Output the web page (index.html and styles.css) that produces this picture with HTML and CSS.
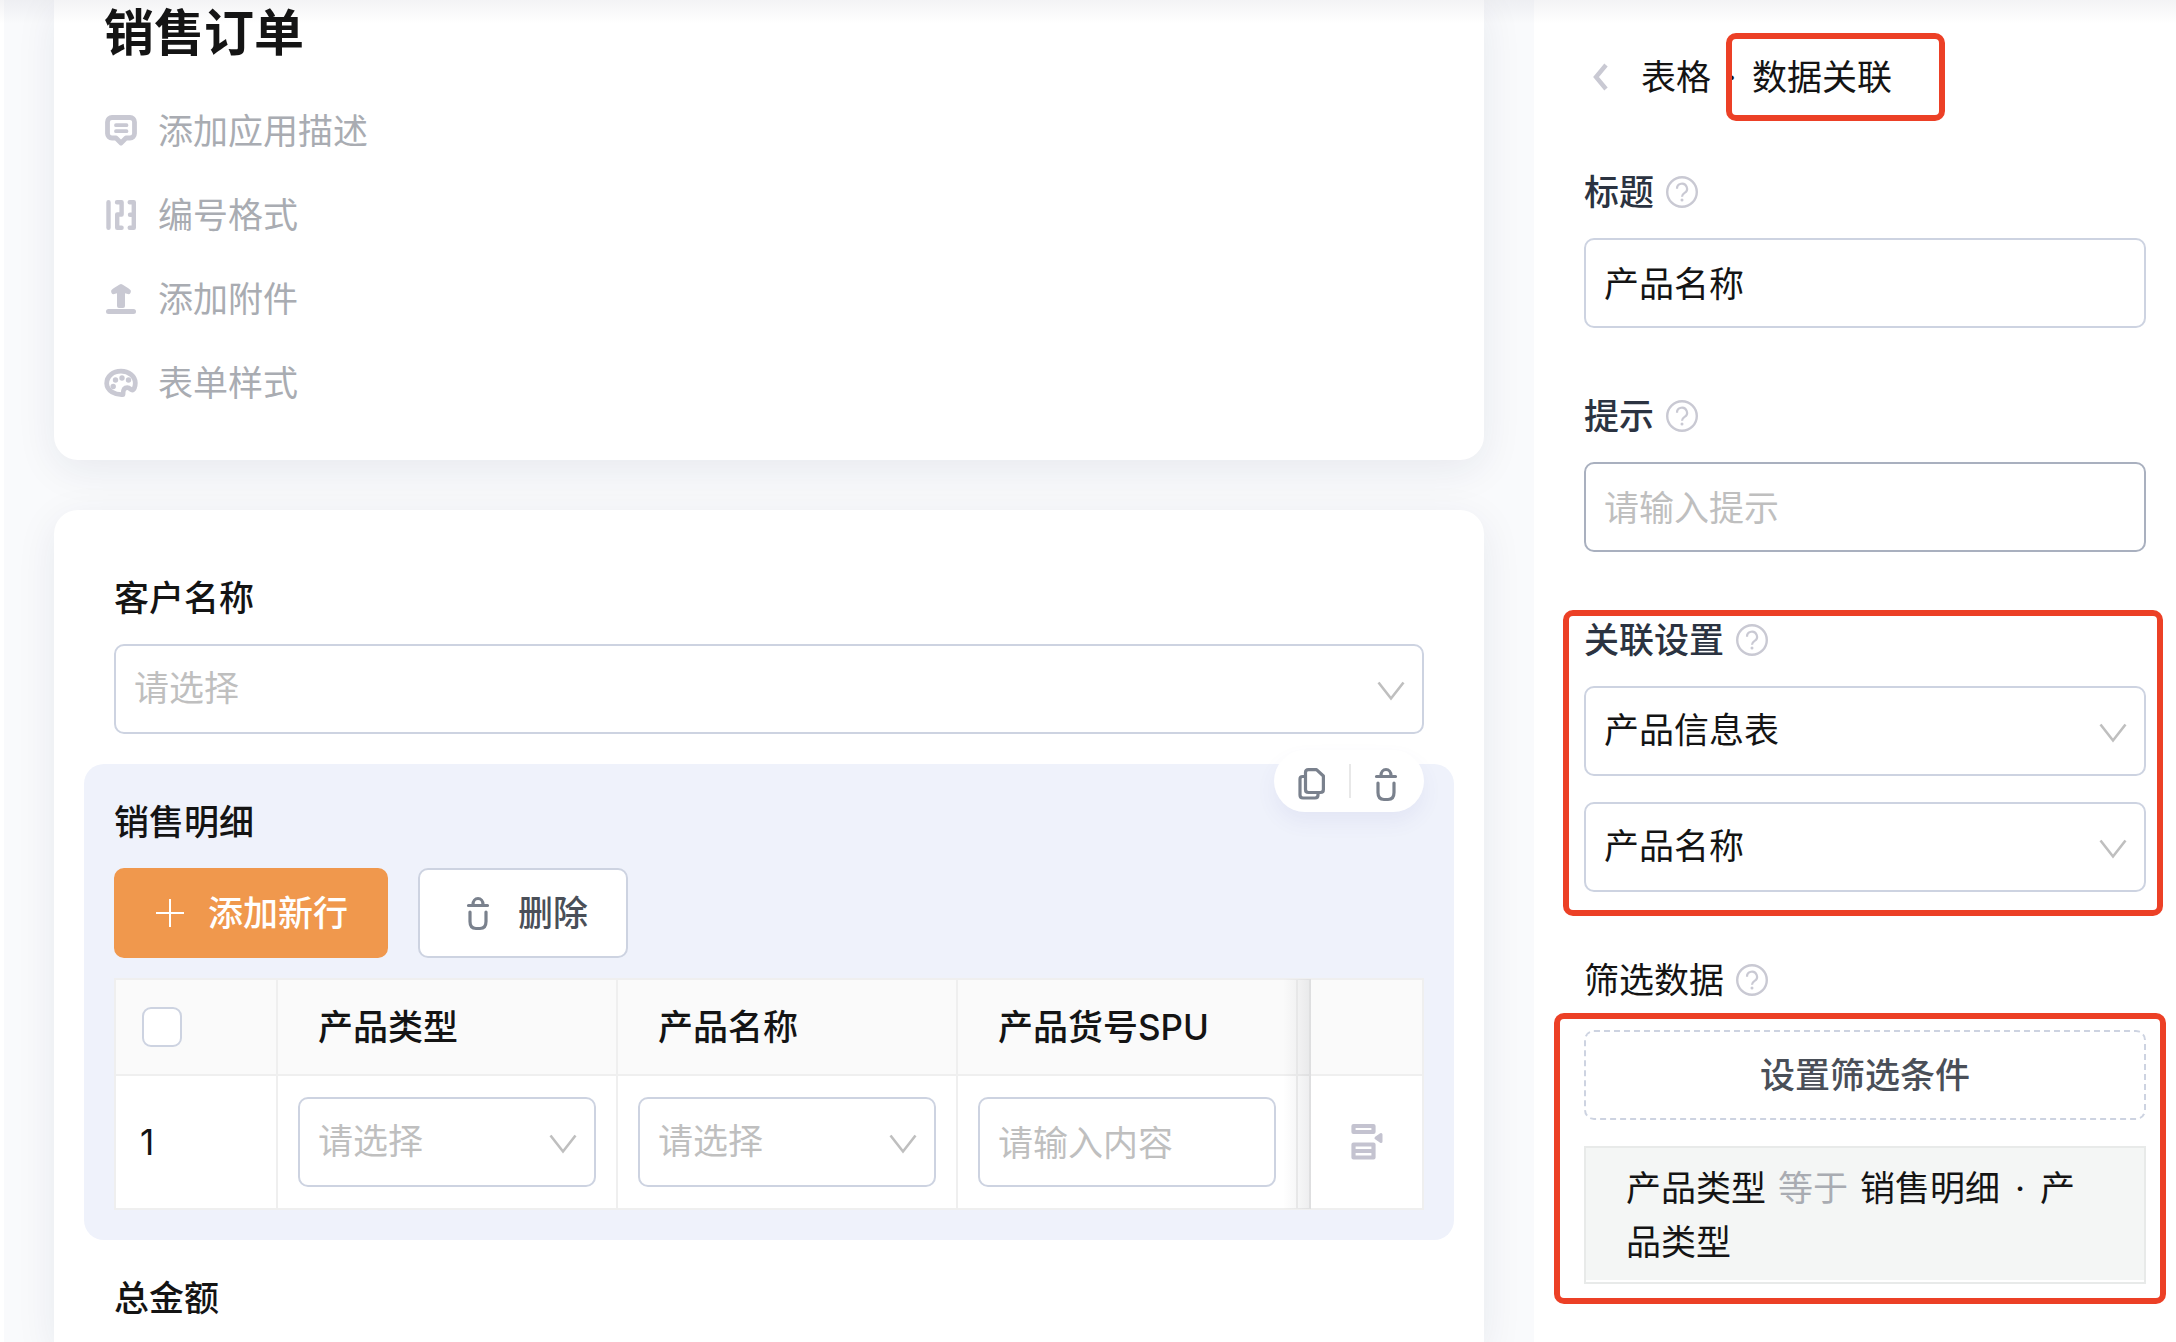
FILE: index.html
```html
<!DOCTYPE html>
<html lang="zh-CN">
<head>
<meta charset="utf-8">
<meta name="viewport" content="width=device-width, initial-scale=1">
<title>销售订单</title>
<link rel="stylesheet" href="styles.css">
</head>
<body>
<svg class="sprite" aria-hidden="true">
  <symbol id="chevron" viewBox="0 0 28 20"><path d="M1.500 1.500L14 17.500 26.500 1.500" fill="none" stroke="currentColor" stroke-width="2.600"/></symbol>
  <symbol id="help" viewBox="0 0 32 32"><circle cx="16" cy="16" r="14.800" fill="none" stroke="currentColor" stroke-width="2.400"/><path d="M11 12.800a5 5 0 1 1 7.600 4.100c-1.700 1.100-2.600 1.900-2.600 3.900" fill="none" stroke="currentColor" stroke-width="2.200"/><circle cx="16" cy="24" r="1.500" fill="currentColor"/></symbol>
  <symbol id="trash" viewBox="0 0 24 36"><g fill="none" stroke="currentColor" stroke-width="3.200" stroke-linecap="round"><path d="M2.500 10.500h19M7 9.500a5 6 0 0 1 10 0M4 17v9.500q0 7 6 7h4q6 0 6-7V17"/></g></symbol>
</svg>
<div class="app">
  <main class="canvas">
    <header class="card intro">
      <h1>销售订单</h1>
      <button type="button" class="meta">
        <svg width="32" height="32" viewBox="0 0 32 32" fill="none" stroke="currentColor" stroke-linejoin="round" stroke-linecap="round"><path d="M7 2.500h18a4.500 4.500 0 0 1 4.500 4.500v11.500a4.500 4.500 0 0 1-4.500 4.500h-4l-5 5-5-5H7a4.500 4.500 0 0 1-4.500-4.500V7A4.500 4.500 0 0 1 7 2.500z" stroke-width="4.800"/><path d="M11 10.200h10.500M11 16.200h10.500" stroke-width="3.800"/></svg>
        添加应用描述</button>
      <button type="button" class="meta">
        <svg width="32" height="32" viewBox="0 0 32 32" fill="none" stroke="currentColor" stroke-linejoin="round" stroke-linecap="round" stroke-width="4.400"><path d="M3.500 3.200v25.600M12 3.200h4.600v12.300h-4.400v13.300h4.400M24.700 3.200h4.100v25.600h-4.100M25 15.700h3"/></svg>
        编号格式</button>
      <button type="button" class="meta">
        <svg width="32" height="32" viewBox="0 0 32 32" fill="currentColor"><path d="M16 1c1 0 9 5 9.700 6.300.7 2-.7 4-2 4L20 10.300V23q0 2-2 2h-4q-2 0-2-2V10.300l-3.700 1c-1.300 0-2.700-2-2-4C7 6 15 1 16 1z"/><rect x="1" y="26" width="30" height="5" rx="2.500"/></svg>
        添加附件</button>
      <button type="button" class="meta">
        <svg class="wide" width="34" height="32" viewBox="0 0 34 32"><path d="M19 27.500C11 28 3 24 2.700 16.500 2.700 9 9 4.200 17 4.200S31.300 9.500 31.300 16c0 4-1.500 7-3 7-1.600 0-2.300-2.300-5-2.300-3.300 0-4.300 2-4.300 6.800z" fill="none" stroke="currentColor" stroke-width="4.800" stroke-linejoin="round"/><g fill="currentColor"><circle cx="11.500" cy="13" r="2.700"/><circle cx="18" cy="11" r="2.700"/><circle cx="24.500" cy="13" r="2.700"/><circle cx="9.200" cy="19.500" r="2.700"/></g></svg>
        表单样式</button>
    </header>

    <form class="card form">
      <label class="label" for="customer">客户名称</label>
      <div class="select"><select id="customer" class="empty"><option>请选择</option></select><svg width="28" height="20"><use href="#chevron"/></svg></div>

      <section class="detail" aria-labelledby="detail-title">
        <div class="tools">
          <button type="button" aria-label="复制"><svg width="28" height="34" viewBox="0 0 28 34" fill="none" stroke="currentColor" stroke-width="3.200" stroke-linejoin="round"><path d="M10.500 2.600h8L25.400 9v13.500q0 3-3 3H10.500q-3 0-3-3V5.600q0-3 3-3z"/><path d="M7 9.500H4.600q-2.600 0-2.600 2.600V28q0 3 3 3h12q3 0 3-3v-2"/></svg></button>
          <span class="divider"></span>
          <button type="button" aria-label="删除明细"><svg width="24" height="36"><use href="#trash"/></svg></button>
        </div>
        <h2 class="label" id="detail-title">销售明细</h2>
        <div class="actions">
          <button type="button" class="btn primary"><svg width="28" height="28" viewBox="0 0 28 28"><path d="M14 0v28M0 14h28" stroke="currentColor" stroke-width="2"/></svg>添加新行</button>
          <button type="button" class="btn"><svg width="24" height="36"><use href="#trash"/></svg>删除</button>
        </div>
        <table>
          <colgroup><col class="c-index"><col><col><col><col class="c-gap"><col class="c-op"></colgroup>
          <thead>
            <tr><th class="index"><input type="checkbox" aria-label="全选"></th><th>产品类型</th><th>产品名称</th><th>产品货号SPU</th><th class="gap"></th><th class="op"></th></tr>
          </thead>
          <tbody>
            <tr>
              <td class="index">1</td>
              <td><div class="select"><select class="empty" aria-label="产品类型"><option>请选择</option></select><svg width="28" height="20"><use href="#chevron"/></svg></div></td>
              <td><div class="select"><select class="empty" aria-label="产品名称"><option>请选择</option></select><svg width="28" height="20"><use href="#chevron"/></svg></div></td>
              <td><input class="text" type="text" placeholder="请输入内容" aria-label="产品货号SPU"></td>
              <td class="gap"></td>
              <td class="op"><button type="button" aria-label="行操作"><svg width="32" height="38" viewBox="0 0 32 38" fill="none" stroke="currentColor" stroke-linejoin="round"><path d="M2.500 3h20v6h-20z" stroke-width="4.200"/><path d="M2.500 21.500h20v13h-20zM2.500 28h20" stroke-width="4.200"/><path d="M30 11.500v7l-5-3.500z" fill="currentColor" stroke-width="3"/></svg></button></td>
            </tr>
          </tbody>
        </table>
      </section>

      <h2 class="label">总金额</h2>
    </form>
  </main>

  <aside class="panel">
    <nav class="crumbs">
      <button type="button" aria-label="返回"><svg width="18" height="28" viewBox="0 0 18 28"><path d="M14 2L4 14l10 12" fill="none" stroke="currentColor" stroke-width="4.400"/></svg></button>
      <span>表格</span><span class="dot">·</span><span class="marked mark-crumb">数据关联</span>
    </nav>
    <div class="field">
      <div class="label"><label for="title">标题</label><svg width="32" height="32"><use href="#help"/></svg></div>
      <input class="text" id="title" type="text" value="产品名称">
    </div>
    <div class="field">
      <div class="label"><label for="hint">提示</label><svg width="32" height="32"><use href="#help"/></svg></div>
      <input class="text hover" id="hint" type="text" placeholder="请输入提示">
    </div>
    <div class="field marked mark-link">
      <div class="label"><label for="source">关联设置</label><svg width="32" height="32"><use href="#help"/></svg></div>
      <div class="stack">
        <div class="select"><select id="source"><option>产品信息表</option></select><svg width="28" height="20"><use href="#chevron"/></svg></div>
        <div class="select"><select aria-label="关联字段"><option>产品名称</option></select><svg width="28" height="20"><use href="#chevron"/></svg></div>
      </div>
    </div>
    <div class="field filter">
      <div class="label"><span>筛选数据</span><svg width="32" height="32"><use href="#help"/></svg></div>
      <div class="stack marked mark-filter">
        <button type="button" class="dashed">设置筛选条件</button>
        <div class="rule"><p>产品类型<span class="operator">等于</span>销售明细<span class="dot">·</span>产品类型</p></div>
      </div>
    </div>
  </aside>
</div>
</body>
</html>
```
FILE: styles.css
```css
:root {
  --ink: #141414;
  --slate: #2b3341;
  --line: #cdd3e1;
  --muted: #bfbfbf;
  --icon: #c9c9d3;
  --mark: #ec4026;
}
* { box-sizing: border-box; }
body {
  margin: 0;
  color: var(--ink);
  background: #fff;
  font: 35px/54px "Inter", "Noto Sans CJK SC", sans-serif;
}
button, input, select { font: inherit; color: inherit; margin: 0; }
button { padding: 0; border: 0; background: none; cursor: pointer; }
svg { display: block; flex: none; }
.sprite { position: absolute; width: 0; height: 0; }

.app { position: relative; display: flex; min-height: 100vh; }
/* shade cast by the top bar */
.app::before {
  content: "";
  position: absolute;
  inset: 0 0 auto;
  height: 24px;
  background: linear-gradient(rgba(30, 30, 60, .05), rgba(30, 30, 60, 0));
  pointer-events: none;
  z-index: 2;
}

.canvas {
  flex: 1;
  min-width: 0;
  display: flex;
  flex-direction: column;
  gap: 50px;
  padding: 0 50px;
  border-left: 4px solid #fff;
  background: #f9fafc;
}
.card { background: #fff; box-shadow: 0 10px 40px rgba(30, 35, 80, .08); }
.intro {
  display: flex;
  flex-direction: column;
  align-items: flex-start;
  gap: 30px;
  padding: 0 50px 50px;
  border-radius: 0 0 24px 24px;
}
h1 { margin: 0 0 8px; font-size: 50px; line-height: 66px; font-weight: 700; }
.meta { display: flex; align-items: center; gap: 21px; color: #a9acb2; }
.meta svg { color: var(--icon); margin-left: 1px; }
.meta .wide { margin: 0 -1px 0 0; }

.form { flex: 1; padding: 60px 60px 0; border-radius: 24px 24px 0 0; }
.label { display: flex; align-items: center; gap: 12px; margin: 0 0 19px; padding-top: 1px; font-size: 35px; line-height: 54px; font-weight: 500; }

.select { position: relative; }
.select svg { position: absolute; right: 19px; top: 37px; color: var(--muted); pointer-events: none; }
select, .text {
  appearance: none;
  display: block;
  width: 100%;
  height: 90px;
  padding: 0 18px 2px;
  border: 2px solid var(--line);
  border-radius: 10px;
  background: #fff;
  outline: 0;
}
.text { padding-bottom: 4px; font-family: "Noto Sans CJK SC", sans-serif; }
.empty { color: var(--muted); }
::placeholder { color: var(--muted); opacity: 1; }
.hover { border-color: #a9b0bf; }

.detail { position: relative; margin: 30px -30px; padding: 30px; border-radius: 20px; background: #eff2fb; }
.tools {
  position: absolute;
  top: -14px;
  right: 30px;
  display: flex;
  align-items: center;
  justify-content: space-between;
  width: 150px;
  height: 62px;
  padding: 0 26px 0 24px;
  border-radius: 31px;
  background: #fff;
  box-shadow: 0 10px 20px rgba(90, 80, 170, .07);
  color: #7a818d;
}
.tools button { padding-top: 6px; }
.divider { width: 2px; height: 34px; background: #e8e8e8; }
.actions { display: flex; gap: 30px; margin-bottom: 20px; }
.btn {
  display: flex;
  align-items: center;
  gap: 28px;
  height: 90px;
  padding: 0 38px 0 46px;
  border: 2px solid var(--line);
  border-radius: 10px;
  background: #fff;
  color: #4a4f58;
  font-weight: 500;
}
.btn svg { color: #7a818d; }
.btn.primary { gap: 24px; padding: 0 38px 0 40px; border-color: #f0984d; background: #f0984d; color: #fff; }
.btn.primary svg { color: #fff; }

table { width: 100%; table-layout: fixed; border-collapse: collapse; background: #fff; }
.c-index { width: 162px; }
.c-gap { width: 13px; }
.c-op { width: 113px; }
th, td { height: 96px; padding: 0 20px; border: 2px solid #efefef; text-align: left; }
th { padding-left: 40px; background: #fafafa; font-weight: 500; }
td { height: 134px; font-weight: 400; }
th.index { padding: 0 26px; }
td.index { padding: 0 24px; }
th.op, td.op { position: relative; padding: 0; }
.gap { padding: 0; }
/* shadow of the pinned column over the scrolled ones */
.op::before {
  content: "";
  position: absolute;
  inset: -1px 100% -1px auto;
  width: 28px;
  background: linear-gradient(90deg, rgba(20, 24, 40, 0), rgba(20, 24, 40, .04) 55%, rgba(20, 24, 40, .08));
  pointer-events: none;
}
.op button { display: block; margin: 0 auto; color: #c4c3d0; }
[type="checkbox"] {
  appearance: none;
  display: block;
  width: 40px;
  height: 40px;
  border: 2px solid var(--line);
  border-radius: 9px;
  background: #fff;
}

.panel { flex: 0 0 642px; display: flex; flex-direction: column; gap: 60px; padding: 50px 30px 38px 50px; background: #fff; }
.crumbs { display: flex; align-items: center; }
.crumbs button { margin: 0 31px 0 8px; color: var(--icon); }
.dot { display: inline-block; width: 40px; text-align: center; }
.crumbs .dot { width: 41px; }
.panel .label svg { color: var(--icon); }
.panel .label { color: var(--slate); }
.stack { display: flex; flex-direction: column; gap: 26px; }
.filter .label { margin-bottom: 23px; color: var(--ink); font-weight: 400; }
.dashed { height: 90px; border: 2px dashed var(--line); border-radius: 10px; color: #4a4f58; font-weight: 500; }
.rule { padding-bottom: 2px; border: 2px solid #e8eae9; }
.rule p { margin: 0; padding: 13px 40px 11px; background: #f4f6f5; }
.operator { margin: 0 12px; color: #a9acb2; }

/* red call-out frames */
.marked { position: relative; }
.marked::after {
  content: "";
  position: absolute;
  border: 6px solid var(--mark);
  border-radius: 10px;
  pointer-events: none;
}
.mark-crumb::after { inset: -17px -53px -17px -26px; }
.mark-link::after { inset: -2px -17px -24px -21px; }
.mark-filter::after { inset: -17px -20px -20px -30px; }
```
